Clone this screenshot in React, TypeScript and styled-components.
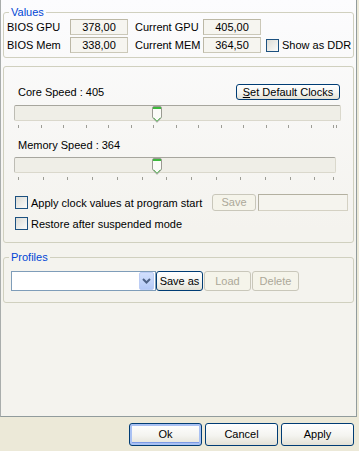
import styled, { createGlobalStyle } from 'styled-components'

const GlobalStyle = createGlobalStyle`
  html, body {
    margin: 0;
    padding: 0;
  }
  body {
    font-family: 'Liberation Sans', Arial, sans-serif;
    font-size: 11px;
    color: #000;
    background: #ece9d8;
  }
`

const coreTicks = [...Array.from({ length: 15 }, (_, i) => 4 + i * 22.5), 322]
const memTicks = [...Array.from({ length: 13 }, (_, i) => 4 + i * 24.7), 319]

const Slider = ({ width, ticks, thumb }: { width: number; ticks: number[]; thumb: number }) => (
  <SliderWrap style={{ width }}>
    <Track>
      <Thumb style={{ left: thumb }} width="10" height="17" viewBox="0 0 10 17">
        <path d="M0.5 2 Q0.5 0.5 2 0.5 H8 Q9.5 0.5 9.5 2 V11.5 L5 16.3 L0.5 11.5 Z" fill="#fbfbf8" stroke="#9a9a92" />
        <rect x="1" y="1" width="8" height="2" fill="#3cb83c" />
        <polyline points="1.5,11.6 5,15.2 8.5,11.6" fill="none" stroke="#5cb85c" />
      </Thumb>
    </Track>
    <Ticks width={width} height="4">
      {ticks.map((x) => (
        <rect key={x} x={Math.round(x)} y="0" width="1" height="3" fill="#9d9d96" />
      ))}
    </Ticks>
  </SliderWrap>
)

const Check = ({ label }: { label: string }) => (
  <CheckLabel>
    <CheckBox />
    <span>{label}</span>
  </CheckLabel>
)

const App = () => {
  return (
    <Window>
      <GlobalStyle />
      <TabBody>
        <ValuesGroup>
          <Legend>Values</Legend>
          <ValuesGrid>
            <Cell>BIOS GPU</Cell>
            <ValueBox>378,00</ValueBox>
            <Cell $indent={7}>Current GPU</Cell>
            <ValueBox>405,00</ValueBox>
            <Cell />
            <Cell>BIOS Mem</Cell>
            <ValueBox>338,00</ValueBox>
            <Cell $indent={7}>Current MEM</Cell>
            <ValueBox>364,50</ValueBox>
            <Cell $indent={5}>
              <Check label="Show as DDR" />
            </Cell>
          </ValuesGrid>
        </ValuesGroup>

        <ClockGroup>
          <ClockHeader>
            <span>Core Speed : 405</span>
            <XpButton $w={104} $h={16}>
              <u>S</u>et Default Clocks
            </XpButton>
          </ClockHeader>
          <Slider width={327} ticks={coreTicks} thumb={137} />
          <SpeedLabel>Memory Speed : 364</SpeedLabel>
          <Slider width={322} ticks={memTicks} thumb={137} />

          <OptionRow>
            <Check label="Apply clock values at program start" />
            <XpButton $w={44} $h={17} disabled style={{ marginLeft: 'auto' }}>
              Save
            </XpButton>
            <DisabledInput />
          </OptionRow>
          <OptionRow $top={4}>
            <Check label="Restore after suspended mode" />
          </OptionRow>
        </ClockGroup>

        <ProfilesGroup>
          <Legend>Profiles</Legend>
          <ProfileRow>
            <Combo>
              <ComboArrow>
                <svg width="9" height="6" viewBox="0 0 9 6">
                  <polyline points="1,1 4.5,4.5 8,1" fill="none" stroke="#4d6185" strokeWidth="2" />
                </svg>
              </ComboArrow>
            </Combo>
            <XpButton $w={47} $h={20}>Save as</XpButton>
            <XpButton $w={47} $h={20} disabled>
              Load
            </XpButton>
            <XpButton $w={47} $h={20} disabled>
              Delete
            </XpButton>
          </ProfileRow>
        </ProfilesGroup>
      </TabBody>

      <Footer>
        <XpButton $w={73} $h={23} $default>
          Ok
        </XpButton>
        <XpButton $w={73} $h={23}>Cancel</XpButton>
        <XpButton $w={73} $h={23}>Apply</XpButton>
      </Footer>
    </Window>
  )
}

export default App

const Window = styled.div`
  width: 359px;
  height: 451px;
  display: flex;
  flex-direction: column;
  background: #ece9d8;
`

const TabBody = styled.div`
  box-sizing: border-box;
  width: 357px;
  height: 417px;
  display: flex;
  flex-direction: column;
  padding-top: 6px;
  border: 1px solid #919b9c;
  border-top: none;
  border-left-color: #a9adac;
  background: linear-gradient(to bottom, #fcfcfe, #f4f3ee 55%);
`

const Group = styled.fieldset`
  margin: 0 2px;
  border: 1px solid #d0d0bf;
  border-radius: 3px;
  min-width: 0;
`

const ValuesGroup = styled(Group)`
  padding: 0 3px 4px;
`

const ProfilesGroup = styled(Group)`
  margin-top: 8px;
  padding: 7px 3px 11px;
`

const Legend = styled.legend`
  color: #0046d5;
  padding: 0 2px;
  margin-left: 2px;
  line-height: 13px;
`

const ValuesGrid = styled.div`
  display: grid;
  grid-template-columns: 63px 58px 75px 58px auto;
  grid-auto-rows: 16px;
  row-gap: 2px;
  align-items: center;
`

const Cell = styled.div<{ $indent?: number }>`
  padding-left: ${({ $indent }) => $indent ?? 0}px;
  white-space: nowrap;
`

const ValueBox = styled.div`
  box-sizing: border-box;
  height: 16px;
  display: flex;
  align-items: center;
  justify-content: center;
  border: 1px solid #cbc8b8;
  border-top-color: #bcb8a6;
  border-left-color: #bcb8a6;
  background: #f6f5f0;
`

const CheckLabel = styled.label`
  display: flex;
  align-items: center;
  gap: 3px;
  white-space: nowrap;
`

const CheckBox = styled.span`
  box-sizing: border-box;
  flex: none;
  width: 13px;
  height: 13px;
  border: 1px solid #1c5180;
  background: linear-gradient(135deg, #dcdcd6, #fbfbf9);
`

const ClockGroup = styled.div`
  margin: 8px 2px 0;
  padding: 17px 0 10px;
  border: 1px solid #d0d0bf;
  border-radius: 3px;
  display: flex;
  flex-direction: column;
`

const ClockHeader = styled.div`
  display: flex;
  align-items: center;
  justify-content: space-between;
  height: 16px;
  padding: 0 13px 0 14px;
`

const SpeedLabel = styled.div`
  margin: 10px 0 0 14px;
  line-height: 13px;
`

const SliderWrap = styled.div`
  margin: 5px 0 0 10px;
  display: flex;
  flex-direction: column;
`

const Track = styled.div`
  position: relative;
  box-sizing: border-box;
  height: 16px;
  border: 1px solid #dad8cc;
  border-top-color: #a7a69e;
  border-left-color: #bdbcb4;
  border-radius: 2px;
  background: #efeee7;
`

const Thumb = styled.svg`
  position: absolute;
  top: 0;
  display: block;
`

const Ticks = styled.svg`
  display: block;
  margin-top: 4px;
`

const OptionRow = styled.div<{ $top?: number }>`
  display: flex;
  align-items: center;
  height: 17px;
  margin-top: ${({ $top }) => $top ?? 13}px;
  padding: 0 5px 0 11px;
`

const DisabledInput = styled.div`
  box-sizing: border-box;
  width: 90px;
  height: 17px;
  margin-left: 2px;
  border: 1px solid #d4d1c3;
  border-top-color: #b3b0a0;
  border-left-color: #b3b0a0;
  background: #f5f4ee;
`

const ProfileRow = styled.div`
  display: flex;
  align-items: center;
  gap: 1px;
  margin-left: 4px;
`

const Combo = styled.div`
  box-sizing: border-box;
  width: 145px;
  height: 20px;
  margin-right: -1px;
  display: flex;
  justify-content: flex-end;
  padding-right: 1px;
  border: 1px solid #7f9db9;
  background: #fff;
`

const ComboArrow = styled.div`
  box-sizing: border-box;
  width: 15px;
  height: 100%;
  display: flex;
  align-items: center;
  justify-content: center;
  border-radius: 2px;
  border: 1px solid #bccdf5;
  background: linear-gradient(to bottom, #d2e0fd, #b4c9f6);
`

const XpButton = styled.button<{ $w: number; $h: number; $default?: boolean }>`
  box-sizing: border-box;
  flex: none;
  width: ${({ $w }) => $w}px;
  height: ${({ $h }) => $h}px;
  padding: 0;
  font: inherit;
  font-size: 11px;
  line-height: 1;
  color: #000;
  border: 1px solid #003c74;
  border-radius: 3px;
  background: linear-gradient(to bottom, #ffffff, #f4f4f0 55%, #e3e1d6);
  box-shadow: ${({ $default }) => ($default ? 'inset 0 0 0 2px #a9c1f3, inset 0 -2px 0 1px #7d9be6' : 'none')};

  &:disabled {
    color: #aca899;
    border-color: #c9c7ba;
    background: #f5f4ea;
  }
`

const Footer = styled.div`
  display: flex;
  justify-content: flex-end;
  gap: 3px;
  padding: 6px 5px 0 0;
`
